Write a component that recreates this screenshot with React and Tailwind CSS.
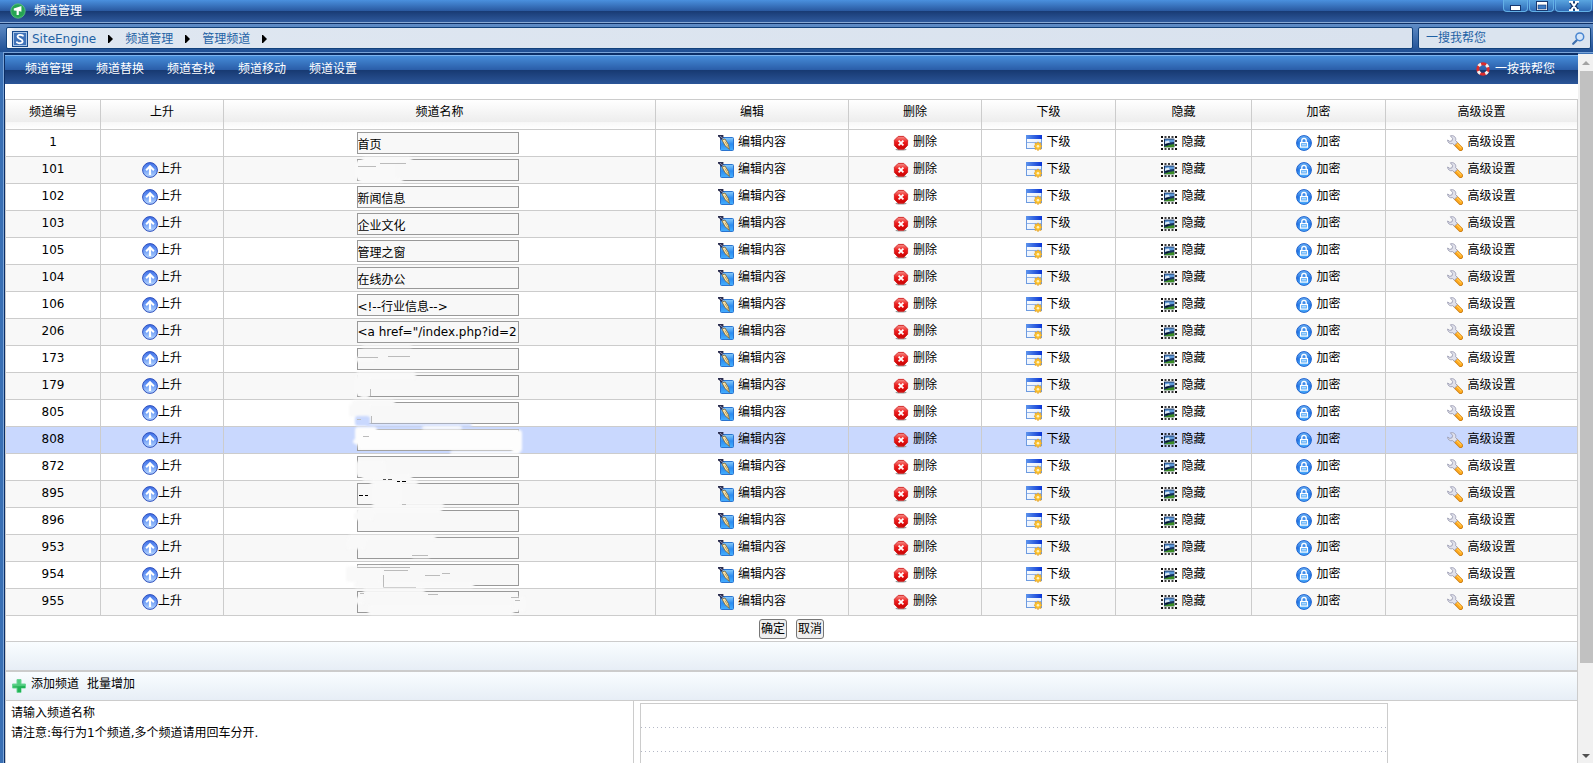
import { useState } from "react";

const UpIcon = () => (
  <svg width="16" height="16" viewBox="0 0 16 16" className="shrink-0">
    <defs>
      <linearGradient id="up" x1="0" y1="0" x2="0" y2="1">
        <stop offset="0" stopColor="#3f6fe6" />
        <stop offset="0.45" stopColor="#6a9af5" />
        <stop offset="1" stopColor="#b9d8ff" />
      </linearGradient>
    </defs>
    <circle cx="8" cy="8" r="7.4" fill="url(#up)" stroke="#2f50bd" />
    <path d="M8 2.8 12.6 7.4 11.2 8.9 9.1 6.9V13H6.9V6.9L4.8 8.9 3.4 7.4z" fill="#fff" />
  </svg>
);

const EditIcon = () => (
  <svg width="16" height="16" viewBox="0 0 16 16" className="shrink-0">
    <defs>
      <linearGradient id="edit" x1="0" y1="0" x2="0" y2="1">
        <stop offset="0" stopColor="#8accfa" />
        <stop offset="0.5" stopColor="#2b8cf0" />
        <stop offset="1" stopColor="#46b0ff" />
      </linearGradient>
    </defs>
    <rect x="2.5" y="2.5" width="13" height="13" rx="1" fill="url(#edit)" stroke="#2b74cf" />
    <path d="M4 5 7 4 10.4 9.5 11.4 14.4 7 10.6z" fill="#fbe6ae" stroke="#6b5220" strokeWidth="0.7" />
    <path d="M7 6.6 10.4 12.4" stroke="#a9883c" strokeWidth="0.7" />
    <path d="M0 0H5.4V3L3.2 5 1.6 2.6 0 1.6z" fill="#2a2c4e" />
    <path d="M2 1.2 5.2 3.6" stroke="#9aa2c4" strokeWidth="0.9" />
  </svg>
);

const DeleteIcon = () => (
  <svg width="16" height="16" viewBox="0 0 16 16" className="shrink-0">
    <defs>
      <linearGradient id="del" x1="0" y1="0" x2="0" y2="1">
        <stop offset="0" stopColor="#f6908a" />
        <stop offset="0.45" stopColor="#ee1c1c" />
        <stop offset="1" stopColor="#c80000" />
      </linearGradient>
    </defs>
    <ellipse cx="8" cy="14.6" rx="5.5" ry="1" fill="#999" />
    <path d="M5.2 1.4H10.8L14.6 5.2V10.4L10.8 14.2H5.2L1.4 10.4V5.2z" fill="url(#del)" stroke="#d42a2a" />
    <path d="M5.6 5.6 10.4 10.4M10.4 5.6 5.6 10.4" stroke="#fff" strokeWidth="1.8" />
  </svg>
);

const SubIcon = () => (
  <svg width="16" height="16" viewBox="0 0 16 16" className="shrink-0">
    <defs>
      <linearGradient id="sub" x1="0" y1="0" x2="1" y2="0">
        <stop offset="0" stopColor="#5d94ec" />
        <stop offset="1" stopColor="#0a35d6" />
      </linearGradient>
      <linearGradient id="subBody" x1="0" y1="0" x2="1" y2="1">
        <stop offset="0" stopColor="#fff" />
        <stop offset="1" stopColor="#dbe8fc" />
      </linearGradient>
    </defs>
    <rect x="0.5" y="0.5" width="15" height="13" fill="url(#subBody)" stroke="#6d9be0" />
    <rect width="16" height="4" fill="url(#sub)" />
    <path d="M1 7.5H15" stroke="#8fb2ea" />
    <path
      d="M12 6.8 13 8.6 15 8 14.6 10 16 11.3 14.6 12.4 15 14.5 13 14 12 15.8 11 14 9 14.5 9.4 12.4 8 11.3 9.4 10 9 8 11 8.6z"
      fill="#fbc12c"
      stroke="#e09a1c"
      strokeWidth="0.6"
    />
    <circle cx="12" cy="11.3" r="1.3" fill="#fff3c4" />
  </svg>
);

const HideIcon = () => (
  <svg width="16" height="14" viewBox="0 0 16 14" className="shrink-0">
    <path d="M0 1H16M0 13H16" stroke="#000" strokeWidth="1.6" strokeDasharray="2 1.5" />
    <path d="M1 0V14M15 0V14" stroke="#000" strokeWidth="1.6" strokeDasharray="2 2" />
    <rect x="3" y="2.6" width="10.4" height="8.6" fill="#15305c" />
    <path d="M4 3.4H13V6L4 7z" fill="#5f9bdc" />
    <path d="M4 5.6 7.5 4.4 9 6.4 4 8z" fill="#dbe9f7" />
    <path d="M3 10.8 8 9 13.2 8V11.2H3z" fill="#3b8c25" />
    <path d="M4 8 8.6 7.6 5.8 9.6z" fill="#061020" />
  </svg>
);

const LockIcon = () => (
  <svg width="16" height="16" viewBox="0 0 16 16" className="shrink-0">
    <defs>
      <linearGradient id="lock" x1="0" y1="0" x2="0" y2="1">
        <stop offset="0" stopColor="#6fb4f5" />
        <stop offset="0.5" stopColor="#2478e6" />
        <stop offset="1" stopColor="#4db2ff" />
      </linearGradient>
    </defs>
    <circle cx="8" cy="8" r="7.4" fill="url(#lock)" stroke="#1f62cf" />
    <path d="M5.8 7.4V5.6A2.2 2.2 0 0 1 10.2 5.6V7.4" fill="none" stroke="#fff" strokeWidth="1.3" />
    <rect x="4.5" y="7.5" width="7" height="4.6" fill="#5fb0f8" stroke="#fff" strokeWidth="1.2" />
    <path d="M6 9.8H10" stroke="#d7ebff" />
  </svg>
);

const WrenchIcon = () => (
  <svg width="16" height="16" viewBox="0 0 16 16" className="shrink-0">
    <path d="M8.6 8.6 13.6 13.6" stroke="#c97a10" strokeWidth="4.8" strokeLinecap="round" />
    <path d="M8.8 8.6 13.5 13.3" stroke="#ffab1f" strokeWidth="3.6" strokeLinecap="round" />
    <path d="M9.6 8.4 14 12.6" stroke="#ffdc7c" strokeWidth="0.9" strokeLinecap="round" />
    <path
      d="M3.4 0.8C6 0 8.8 1.6 8.8 4.4L8.6 5.6 10.4 7.4 7.4 10.2 5.6 8.6C3 9.4 0.6 7.6 0.6 5L2.8 6.4 5 5.8 5.6 3.4z"
      fill="#e1e2ec"
      stroke="#9b9cb2"
      strokeWidth="0.9"
    />
  </svg>
);

const AppIcon = () => (
  <svg width="16" height="16" viewBox="0 0 16 16" className="shrink-0">
    <circle cx="8" cy="8" r="7.2" fill="#26a353" stroke="#5fc787" strokeWidth="0.8" />
    <path d="M2 8.4A6 6 0 0 0 14 8.4L13 12 8 14.4 3 12z" fill="#3fca62" />
    <path d="M3.8 5.6 11.4 3V8.8L8.8 8V12H6.6V7.8L3.8 7.4z" fill="#fff" />
  </svg>
);

const SiteIcon = () => (
  <svg width="16" height="16" viewBox="0 0 16 16" className="shrink-0">
    <rect x="0.5" y="0.5" width="15" height="15" fill="#3f72b8" stroke="#164a8d" />
    <rect x="1.5" y="1.5" width="13" height="13" fill="none" stroke="#a9c6e8" />
    <path
      d="M10.8 5.4V4.6C9.2 3.4 5.6 3.6 5.6 5.8S10.6 7.8 10.6 10.2 6.4 12.6 5 11.4V10.4"
      fill="none"
      stroke="#fff"
      strokeWidth="1.9"
    />
  </svg>
);

const LifebuoyIcon = () => (
  <svg width="14" height="14" viewBox="0 0 14 14" className="shrink-0">
    <circle cx="7" cy="7" r="5.2" fill="none" stroke="#dc2b2b" strokeWidth="3" />
    <circle
      cx="7"
      cy="7"
      r="5.2"
      fill="none"
      stroke="#f1f1f1"
      strokeWidth="3"
      strokeDasharray="3 5.17"
      strokeDashoffset="-2.6"
    />
  </svg>
);

const SearchIcon = () => (
  <svg width="13" height="13" viewBox="0 0 13 13" className="shrink-0">
    <path d="M5 8 1.2 11.8" stroke="#3d6fae" strokeWidth="2.2" strokeLinecap="round" />
    <circle cx="7.8" cy="4.8" r="3.9" fill="#d5e6fa" stroke="#4a86d0" strokeWidth="1.5" />
  </svg>
);

const PlusIcon = () => (
  <svg width="14" height="14" viewBox="0 0 14 14" className="shrink-0">
    <path d="M5 0.5H9V5H13.5V9H9V13.5H5V9H0.5V5H5z" fill="#4fcb7d" stroke="#6bd596" />
    <path d="M5.5 13V8.5H1V7.5L13 7V9H9V13z" fill="#22b356" />
  </svg>
);

const Triangle = () => (
  <svg width="5" height="8" viewBox="0 0 5 8" className="mx-3 shrink-0">
    <path d="M0 0H1L5 4 1 8H0z" fill="#000" />
  </svg>
);

// wipes: [x, y, width, height] of painted-over areas, marks: leftover strokes
const channels = [
  { id: 1, name: "首页" },
  {
    id: 101,
    wipes: [[22, 0, 50, 5], [15, 4, 40, 18], [19, 21, 44, 5]],
    marks: "M40 6.5H66M18 9.5H36",
  },
  { id: 102, name: "新闻信息" },
  { id: 103, name: "企业文化" },
  { id: 105, name: "管理之窗" },
  { id: 104, name: "在线办公" },
  { id: 106, name: "<!--行业信息-->" },
  { id: 206, name: '<a href="/index.php?id=2' },
  {
    id: 173,
    wipes: [[22, -1, 50, 3], [15, 11, 22, 5]],
    marks: "M18 11.5H38M48 10.5H70",
  },
  {
    id: 179,
    wipes: [[16, -1, 60, 7], [14, 4, 16, 18], [20, 19, 9, 6]],
    marks: "M30.5 16V23",
  },
  {
    id: 805,
    wipes: [[12, 0, 43, 6], [9, 4, 21, 13]],
    blue: [[15, 16, 15, 10], [26, 24, 106, 3]],
    marks: "M31.5 16V23M17 19.5H21",
  },
  {
    id: 808,
    wipes: [[15, 0, 22, 18], [13, 12, 14, 5], [18, 3, 158, 19], [82, -1, 40, 3], [172, 3, 10, 22], [110, 24, 70, 3]],
    marks: "M23 9.5H29",
  },
  {
    id: 872,
    wipes: [[16, 7, 30, 15], [22, 20, 50, 7]],
    marks: "",
    dashes: "M43 25.5H46M48 25.5H52",
  },
  {
    id: 895,
    wipes: [[30, -1, 48, 5], [32, 4, 30, 18], [32, 22, 72, 6]],
    marks: "M62 23.5H66",
    dashes: "M57 0.5H60M62 0.5H66M19 14.5H23M25 14.5H28",
  },
  { id: 896, wipes: [[16, 0, 86, 5], [14, 4, 20, 8]], marks: "" },
  { id: 953, wipes: [[8, 0, 88, 5], [6, 4, 20, 10], [72, 20, 18, 3]], marks: "M72 20.5H88" },
  {
    id: 954,
    wipes: [[6, 4, 36, 16], [14, 20, 120, 6]],
    marks: "M17 5.5H70M44 8.5H68M43.5 13V25.5M43.5 25.5H76M85 13.5H100M102 11.5H110",
  },
  {
    id: 955,
    wipes: [[23, -1, 62, 5], [15, 8, 10, 7], [174, 8, 12, 14], [28, 16, 146, 10]],
    marks: "M20 4.5H24M88 5.5H98M171 8.5H179M175 11.5H180",
  },
];

const columns = [
  { label: "频道编号", width: "w-[95px]" },
  { label: "上升", width: "w-[123px]" },
  { label: "频道名称", width: "" },
  { label: "编辑", width: "w-[193px]" },
  { label: "删除", width: "w-[133px]" },
  { label: "下级", width: "w-[134px]" },
  { label: "隐藏", width: "w-[136px]" },
  { label: "加密", width: "w-[134px]" },
  { label: "高级设置", width: "w-[192px]" },
];

const actions = [
  { label: "编辑内容", Icon: EditIcon },
  { label: "删除", Icon: DeleteIcon },
  { label: "下级", Icon: SubIcon },
  { label: "隐藏", Icon: HideIcon },
  { label: "加密", Icon: LockIcon },
  { label: "高级设置", Icon: WrenchIcon },
];

const menu = ["频道管理", "频道替换", "频道查找", "频道移动", "频道设置"];

const Smudge = ({ wipes, blue = [], marks, dashes, active }) => (
  <svg
    width="200"
    height="27"
    viewBox="0 0 200 27"
    className="pointer-events-none absolute top-0 left-1/2 -translate-x-1/2 overflow-visible"
  >
    <g className="blur-[1px]">
      {wipes.map(([x, y, w, h]) => (
        <rect key={`${x}-${y}`} x={x} y={y} width={w} height={h} rx="3" fill={active ? "#fdfdfd" : "#f9f9f9"} />
      ))}
      {blue.map(([x, y, w, h]) => (
        <rect key={`${x}-${y}`} x={x} y={y} width={w} height={h} rx="3" fill="#c9d8fe" />
      ))}
    </g>
    <path d={marks} stroke="#bbb" fill="none" />
    <path d={dashes} stroke="#000" fill="none" />
  </svg>
);

const ChannelRow = ({ channel, index, active }) => {
  const [name, setName] = useState(channel.name || "");
  const background = active ? "bg-[#c9d8fe]" : index % 2 ? "bg-[#f8f8f8]" : "bg-white";
  const cell = "h-[27px] border-r border-b border-[#ccc] text-center";

  return (
    <tr className={background}>
      <td className={`${cell} p-0 pb-0.5`}>{channel.id}</td>
      <td className={`${cell} p-0`}>
        {index > 0 && (
          <a href="#up" className="flex items-center justify-center">
            <UpIcon />
            <span className="pb-0.5">上升</span>
          </a>
        )}
      </td>
      <td className={`${cell} relative p-0 pr-1`}>
        <input
          type="text"
          aria-label={`频道名称 ${channel.id}`}
          value={name}
          onChange={(event) => setName(event.target.value)}
          className="mx-auto block h-[22px] w-[162px] border border-[#999] bg-[#f8f8f8] p-0"
        />
        {channel.wipes && <Smudge {...channel} active={active} />}
      </td>
      {actions.map(({ label, Icon }) => (
        <td key={label} className={`${cell} p-0`}>
          <a href="#action" className="flex items-center justify-center gap-1">
            <Icon />
            <span className="pb-0.5">{label}</span>
          </a>
        </td>
      ))}
    </tr>
  );
};

const WindowButtons = () => {
  const button =
    "flex h-3 items-center justify-center rounded-b-sm border border-t-0 border-[#63b0e6] bg-linear-to-b from-[#5aa5e0] to-[#2f6bb6]";

  return (
    <div className="flex items-start gap-px self-start pr-px">
      <button type="button" aria-label="最小化" className={`${button} w-[25px]`}>
        <svg width="11" height="10" viewBox="0 0 11 10">
          <rect x="0.5" y="4.5" width="10" height="5" fill="#fff" stroke="#17386f" />
        </svg>
      </button>
      <button type="button" aria-label="最大化" className={`${button} w-[25px]`}>
        <svg width="12" height="10" viewBox="0 0 12 10">
          <rect x="0.5" y="0.5" width="11" height="9" fill="#fff" stroke="#17386f" />
          <rect x="2" y="4" width="8" height="4" fill="#3d7cc6" stroke="#17386f" strokeWidth="0.6" />
        </svg>
      </button>
      <button type="button" aria-label="关闭" className={`${button} w-[37px]`}>
        <svg width="12" height="10" viewBox="0 0 12 10">
          <path d="M3 0.5 9 9.5M9 0.5 3 9.5" stroke="#17386f" strokeWidth="4.4" />
          <path d="M3 0.5 9 9.5M9 0.5 3 9.5M1 0.8H5M7 0.8H11M1 9.2H5M7 9.2H11" stroke="#fff" strokeWidth="2" />
        </svg>
      </button>
    </div>
  );
};

const App = () => (
  <div className="flex h-screen flex-col overflow-hidden bg-[#3a70b4] font-['DejaVu_Sans','Noto_Sans_CJK_SC',sans-serif] text-xs text-black">
    <header className="flex h-6 shrink-0 items-center border-b border-[#0d2f66] bg-[linear-gradient(#4a90de,#29589f_11px,#183a73_11px,#2f5a9d_22px,#8aabd6_22px)] pb-0.5 pl-2.5 text-white">
      <AppIcon />
      <h1 className="ml-2">频道管理</h1>
      <div className="flex-1" />
      <WindowButtons />
    </header>

    <div className="flex h-7 shrink-0 gap-[5px] bg-linear-to-b from-[#5f8cc6] to-[#1f4f94] py-[3px] pr-0.5 pl-1.5">
      <nav className="flex flex-1 items-center rounded-xs border border-[#12427c] bg-linear-to-r from-white via-[#dfe7f1] via-[8px] to-[#d9e2ee] pt-0.5 pl-[5px] text-[#1f62a5]">
        <SiteIcon />
        <a href="#home" className="ml-1">
          SiteEngine
        </a>
        <Triangle />
        <a href="#channels">频道管理</a>
        <Triangle />
        <a href="#manage">管理频道</a>
        <Triangle />
      </nav>
      <div className="flex w-[173px] items-center rounded-xs border border-[#12427c] bg-[#dbe4ef] pr-[5px] pl-[7px]">
        <input
          type="text"
          aria-label="搜索"
          defaultValue="一搜我帮您"
          className="min-w-0 flex-1 bg-transparent p-0 text-[#1f62a5] outline-none"
        />
        <button type="button" aria-label="搜索">
          <SearchIcon />
        </button>
      </div>
    </div>

    <div className="ml-[3px] flex min-h-0 flex-1 border-t border-l border-[#7aa4d8]">
      <main className="flex min-w-0 flex-1 flex-col border-t border-l border-[#0b2e66] bg-white">
        <nav className="flex h-[30px] shrink-0 items-center gap-[23px] bg-[linear-gradient(#0b2e66_1px,#7db4ee_1px,#7db4ee_2px,#468cd8_2px,#2a5da8_16px,#173971_16px,#2b5598)] pr-[23px] pl-5 text-white">
          {menu.map((item) => (
            <a key={item} href="#menu">
              {item}
            </a>
          ))}
          <a href="#help" className="ml-auto flex items-center gap-[5px]">
            <LifebuoyIcon />
            一按我帮您
          </a>
        </nav>

        <form className="mt-[15px] flex min-h-0 flex-1 flex-col" onSubmit={(event) => event.preventDefault()}>
          <table className="w-full shrink-0 table-fixed border-separate border-spacing-0 border-t border-l border-[#ccc]">
            <thead>
              <tr>
                {columns.map(({ label, width }) => (
                  <th
                    key={label}
                    className={`${width} h-[30px] border-r border-b border-[#ccc] bg-[linear-gradient(#fff,#ededed_22px,#f7f7f7_22px,#fff)] p-0 pb-1.5 font-normal`}
                  >
                    {label}
                  </th>
                ))}
              </tr>
            </thead>
            <tbody>
              {channels.map((channel, index) => (
                <ChannelRow key={channel.id} channel={channel} index={index} active={channel.id === 808} />
              ))}
            </tbody>
          </table>

          <div className="flex min-h-0 flex-1 flex-col border-x border-[#ccc]">
            <div className="flex h-[26px] shrink-0 items-center justify-center gap-[9px] border-b border-[#ccc]">
              <button type="submit" className="h-5 w-7 rounded-[3px] border border-[#767676] bg-[#efefef]">
                确定
              </button>
              <button type="reset" className="h-5 w-7 rounded-[3px] border border-[#767676] bg-[#efefef]">
                取消
              </button>
            </div>
            <div className="h-[30px] shrink-0 border-b-2 border-[#ccc] bg-linear-to-b from-[#f9fdff] to-[#e7eef6]" />
            <div className="flex h-[29px] shrink-0 items-center border-b border-[#ccc] bg-linear-to-b from-[#f9fdff] to-[#e7eef6] pl-1.5">
              <PlusIcon />
              <a href="#add" className="ml-[5px] pb-1">
                添加频道
              </a>
              <a href="#batch" className="ml-2 pb-1">
                批量增加
              </a>
            </div>
            <div className="flex min-h-0 flex-1">
              <label htmlFor="names" className="w-2/5 border-r border-[#ccc] px-[5px] py-0.5 leading-5">
                请输入频道名称
                <br />
                请注意:每行为1个频道,多个频道请用回车分开.
              </label>
              <div className="flex-1 overflow-hidden px-1.5 pt-0.5">
                <textarea
                  id="names"
                  className="block h-40 w-[748px] max-w-full resize-none border border-[#ccc] bg-[linear-gradient(white_23px,transparent_23px),linear-gradient(to_right,#b4b8c6_1px,white_1px)] bg-[length:4px_24px] px-1 leading-6 outline-none"
                />
              </div>
            </div>
          </div>
        </form>
      </main>

      <div className="mt-px flex w-[15px] shrink-0 flex-col items-center bg-[#f1f1f1]">
        <svg width="15" height="17" viewBox="0 0 15 17" className="shrink-0">
          <path d="M4 11 8 7 12 11z" fill="#a3a3a3" />
        </svg>
        <div className="h-[592px] w-[13px] self-end bg-[#c1c1c1]" />
        <svg width="15" height="17" viewBox="0 0 15 17" className="mt-auto shrink-0">
          <path d="M4 8 8 12 12 8z" fill="#505050" />
        </svg>
      </div>
    </div>
  </div>
);

export default App;
